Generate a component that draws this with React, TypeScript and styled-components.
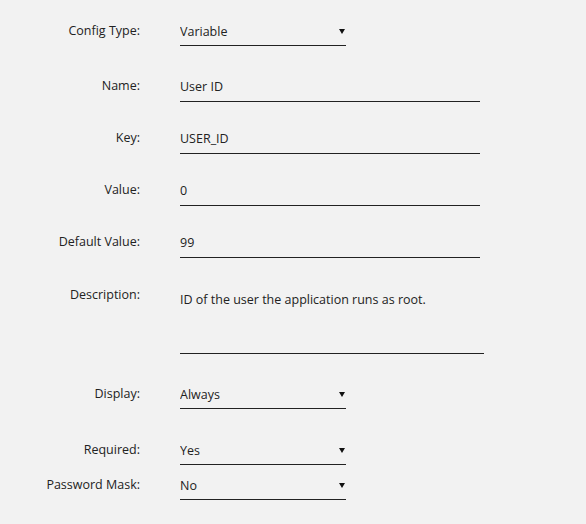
import React from 'react'
import styled, { createGlobalStyle } from 'styled-components'

const GlobalStyle = createGlobalStyle`
    html, body {
        margin: 0;
        padding: 0;
        background: #f2f2f2;
    }
    body {
        font-family: "Open Sans", "Noto Sans", sans-serif;
        font-size: 12.5px;
        color: #222;
    }
`;

const Form = styled.form`
    display: flex;
    flex-direction: column;
    padding: 22px 0 20px 0;
    width: 586px;
    box-sizing: border-box;
`;

const Row = styled.div<{ $gap?: number }>`
    display: flex;
    align-items: flex-start;
    margin-top: ${p => p.$gap ?? 0}px;
`;

const Label = styled.label<{ $shift?: number }>`
    width: 140px;
    flex: none;
    text-align: right;
    line-height: 18px;
    color: #222;
    margin-top: ${p => p.$shift ?? 0}px;
`;

const Field = styled.div<{ $width: number; $pad?: number }>`
    position: relative;
    margin-left: 40px;
    width: ${p => p.$width}px;
    border-bottom: 1px solid #222;
    padding-bottom: ${p => p.$pad ?? 5}px;
`;

const TextInput = styled.input`
    display: block;
    width: 100%;
    height: 18px;
    line-height: 18px;
    border: none;
    padding: 0;
    margin: 0;
    background: transparent;
    font: inherit;
    color: #222;
    outline: none;
`;

const TextArea = styled.textarea`
    display: block;
    width: 100%;
    height: 56px;
    line-height: 18px;
    border: none;
    padding: 0;
    margin: 0;
    resize: none;
    background: transparent;
    font: inherit;
    color: #222;
    outline: none;
`;

const Select = styled.select`
    display: block;
    width: 100%;
    height: 18px;
    line-height: 18px;
    border: none;
    padding: 0;
    margin: 0;
    appearance: none;
    background: transparent;
    font: inherit;
    color: #222;
    outline: none;
`;

// small caret drawn over the native select
const Caret = styled.span`
    position: absolute;
    right: 1px;
    top: 7px;
    width: 0;
    height: 0;
    border-left: 3px solid transparent;
    border-right: 3px solid transparent;
    border-top: 5px solid #111;
    pointer-events: none;
`;

type SelectRowProps = { label: string; value: string; options: string[]; gap?: number };

const SelectRow: React.FC<SelectRowProps> = ({ label, value, options, gap }) => (
    <Row $gap={gap}>
        <Label>{label}</Label>
        <Field $width={166}>
            <Select defaultValue={value}>
                {options.map(o => (
                    <option key={o}>{o}</option>
                ))}
            </Select>
            <Caret />
        </Field>
    </Row>
);

type InputRowProps = { label: string; value: string; gap?: number };

const InputRow: React.FC<InputRowProps> = ({ label, value, gap }) => (
    <Row $gap={gap}>
        <Label>{label}</Label>
        <Field $width={300} $pad={6}>
            <TextInput defaultValue={value} />
        </Field>
    </Row>
);

const App: React.FC = () => (
    <>
        <GlobalStyle />
        <Form onSubmit={e => e.preventDefault()}>
            <SelectRow label="Config Type:" value="Variable" options={['Variable', 'Constant', 'Secret']} />
            <InputRow label="Name:" value="User ID" gap={31} />
            <InputRow label="Key:" value="USER_ID" gap={27} />
            <InputRow label="Value:" value="0" gap={27} />
            <InputRow label="Default Value:" value="99" gap={27} />
            <Row $gap={33}>
                <Label $shift={-5}>Description:</Label>
                <Field $width={304} $pad={6}>
                    <TextArea defaultValue="ID of the user the application runs as root." />
                </Field>
            </Row>
            <SelectRow label="Display:" value="Always" options={['Always', 'Advanced', 'Never']} gap={31} />
            <SelectRow label="Required:" value="Yes" options={['Yes', 'No']} gap={32} />
            <SelectRow label="Password Mask:" value="No" options={['Yes', 'No']} gap={11} />
        </Form>
    </>
);

export default App;
